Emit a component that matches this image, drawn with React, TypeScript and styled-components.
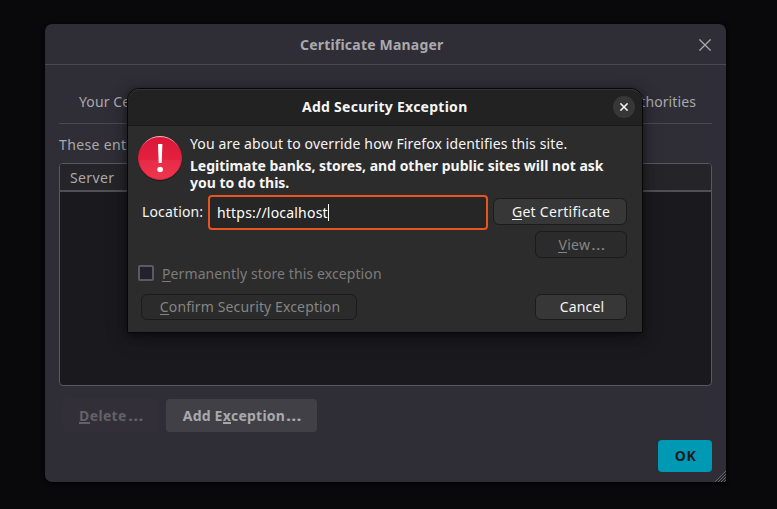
import React from 'react';
import styled, { createGlobalStyle } from 'styled-components';

const GlobalStyle = createGlobalStyle`
  * { box-sizing: border-box; }
  body { margin: 0; background: #09090b; }
  button, input { font: inherit; margin: 0; }
`;

const Screen = styled.div`
  position: relative;
  width: 777px;
  height: 509px;
  padding: 24px 51px 27px 45px;
  overflow: hidden;
  background: #09090b;
  font: 14px/18px "Noto Sans", "Open Sans", sans-serif;
  white-space: nowrap;
`;

const Label = styled.span<{ $track?: number }>`
  display: inline-block;
  letter-spacing: ${(p) => p.$track ?? 0}px;
`;

const Key = styled.span<{ $thick?: boolean }>`
  display: inline-block;
  height: 17px;
  line-height: 18px;
  vertical-align: top;
  border-bottom: ${(p) => (p.$thick ? 2 : 1)}px solid currentColor;
`;

const Ellipsis = styled.span`
  display: inline-block;
  margin: 0 2px 0 1px;
  letter-spacing: 1.2px;
  transform: scaleX(1.3);
  transform-origin: left;
`;

const Manager = styled.section`
  position: relative;
  display: flex;
  flex-direction: column;
  height: 458px;
  border-radius: 7px 7px 3px 7px;
  background: #2f2d36;
  color: #a9a9ac;
  box-shadow: 0 1px 4px #000;
`;

const ManagerHeader = styled.header`
  display: flex;
  align-items: center;
  height: 41px;
  padding: 1px 15px 0 255px;
  justify-content: space-between;
  border-bottom: 1px solid #4b494f;
  font-weight: 700;
`;

const CloseIcon = styled.svg`
  display: block;
  fill: none;
  stroke: currentColor;
`;

const ManagerBody = styled.div`
  display: flex;
  flex-direction: column;
  padding: 15px 14px 10px;
`;

const Tabs = styled.nav`
  display: flex;
  justify-content: space-between;
  align-items: center;
  height: 44px;
  padding: 0 16px 0 20px;
  border-bottom: 1px solid #4b494f;
`;

const Intro = styled.p`
  margin: 12px 0 9px;
`;

const Tree = styled.div`
  height: 223px;
  border: 1px solid #5a585f;
  border-radius: 4px;
  overflow: hidden;
  background: #1a191e;
`;

const TreeHeader = styled.div`
  height: 28px;
  padding: 5px 10px;
  border-bottom: 2px solid #504e56;
  background: #252429;
`;

const ActionRow = styled.div`
  display: flex;
  gap: 8px;
  padding: 13px 0 8px 4px;
`;

const FlatButton = styled.button<{ $width: number; $kind?: 'muted' | 'primary' }>`
  width: ${(p) => p.$width}px;
  height: ${(p) => (p.$kind === 'primary' ? 32 : 33)}px;
  padding: 0 0 0 1px;
  align-self: ${(p) => (p.$kind === 'primary' ? 'flex-end' : 'auto')};
  border: 0;
  border-radius: 4px;
  font-weight: 700;
  background: ${(p) => (p.$kind === 'primary' ? '#0099b3' : p.$kind === 'muted' ? '#322f39' : '#414047')};
  color: ${(p) => (p.$kind === 'primary' ? '#1c1b22' : p.$kind === 'muted' ? '#626166' : '#a9a9ac')};
`;

const Grip = styled.svg`
  position: absolute;
  right: 0;
  bottom: 0;
`;

const DialogShadow = styled.div`
  position: absolute;
  left: 127px;
  top: 88px;
  width: 516px;
  height: 245px;
  border-radius: 12px 12px 0 0;
  box-shadow: 0 2px 10px rgba(0, 0, 0, 0.5), 0 6px 22px rgba(0, 0, 0, 0.2);
`;

const Dialog = styled.section`
  position: absolute;
  left: 127px;
  top: 88px;
  width: 516px;
  height: 245px;
  overflow: hidden;
  border: 1px solid #070708;
  border-radius: 12px 12px 0 0;
  background: #2c2c2c;
  color: #f5f5f5;
`;

const TitleBar = styled.header`
  display: flex;
  align-items: center;
  justify-content: space-between;
  height: 37px;
  padding: 0 7px 0 174px;
  border-bottom: 1px solid #191919;
  border-radius: 11px 11px 0 0;
  box-shadow: inset 0 1px 0 #343434;
  background: #222;
  font-weight: 700;
`;

const RoundClose = styled.button`
  display: grid;
  place-items: center;
  width: 22px;
  height: 22px;
  padding: 0;
  border: 0;
  border-radius: 50%;
  background: #373737;
  color: #fff;
`;

const DialogBody = styled.div`
  display: flex;
  flex-direction: column;
  padding: 9px 15px 0 10px;
`;

const Warning = styled.div`
  display: flex;
  gap: 8px;
  height: 60px;
`;

const AlertDrawing = styled.svg`
  margin-top: 1px;
`;

const Message = styled.p`
  margin: 0;
`;

const Strong = styled.strong`
  display: block;
  padding-top: 4px;
  line-height: 17px;
  letter-spacing: -0.015px;
`;

const LocationRow = styled.div`
  display: flex;
  align-items: center;
  height: 35px;
  padding-left: 4px;
`;

const LocationLabel = styled(Label)`
  padding-bottom: 2px;
`;

const Field = styled.div`
  display: flex;
  align-items: center;
  width: 280px;
  height: 35px;
  margin: 0 5px 0 auto;
  padding: 0 7px;
  border: 2px solid #e95420;
  border-radius: 4px;
  background: #262626;
  color: #fff;
`;

const Caret = styled.i`
  width: 1px;
  height: 17px;
  background: #fff;
`;

const NativeButton = styled.button<{ $width: number; $height?: number; $raised?: boolean }>`
  width: ${(p) => p.$width}px;
  height: ${(p) => p.$height ?? 27}px;
  margin-bottom: ${(p) => (p.$raised ? 2 : 0)}px;
  padding: 0 0 0 2px;
  border: 1px solid #1b1b1b;
  border-radius: 6px;
  background: #373737;
  color: #f5f5f5;

  &:disabled {
    background: #2b2b2b;
    color: #858585;
  }
`;

const ViewRow = styled.div`
  display: flex;
  justify-content: flex-end;
  padding-top: 1px;
`;

const CheckRow = styled.label`
  display: flex;
  align-items: center;
  gap: 8px;
  height: 18px;
  margin-top: 6px;
  color: #7c7c7c;
`;

const CheckLabel = styled(Label)`
  padding-top: 1px;
`;

const CheckBox = styled.span`
  width: 16px;
  height: 16px;
  border: 2px solid #5b5966;
  border-radius: 2px;
  background: #23222b;
`;

const Footer = styled.footer`
  display: flex;
  justify-content: space-between;
  padding: 12px 0 0 3px;
`;

function AlertIcon() {
  return (
    <AlertDrawing width="44" height="46" viewBox="0 0 44 46">
      <defs>
        <linearGradient id="alertRed" x1="0" y1="0" x2="0" y2="1">
          <stop offset="0" stopColor="#dc1638" />
          <stop offset="0.54" stopColor="#e3223f" />
          <stop offset="0.55" stopColor="#e62b48" />
          <stop offset="1" stopColor="#f0364d" />
        </linearGradient>
        <linearGradient id="alertRim" x1="0" y1="0" x2="0" y2="1">
          <stop offset="0" stopColor="#ffb3bd" />
          <stop offset="0.25" stopColor="#d51d3d" />
          <stop offset="1" stopColor="#cf2c42" />
        </linearGradient>
      </defs>
      <ellipse cx="22" cy="22.8" rx="22" ry="22" fill="#1e1418" />
      <circle cx="22" cy="22" r="21.5" fill="url(#alertRed)" stroke="url(#alertRim)" />
      <path d="M20 8h4.4l-.7 19h-3z" fill="#fff" />
      <circle cx="22.1" cy="33.5" r="2.8" fill="#fff" />
    </AlertDrawing>
  );
}

export default function App() {
  return (
    <>
      <GlobalStyle />
      <Screen>
        <Manager>
          <ManagerHeader>
            <Label $track={0.2}>Certificate Manager</Label>
            <CloseIcon width="12" height="12" viewBox="0 0 12 12" strokeWidth="1.3">
              <path d="M.4.4l11.2 11.2M11.6.4L.4 11.6" />
            </CloseIcon>
          </ManagerHeader>
          <ManagerBody>
            <Tabs>
              <Label $track={0.1}>Your Ce</Label>
              <Label $track={0.1}>Authorities</Label>
            </Tabs>
            <Intro>
              <Label $track={0.35}>These entries</Label>
            </Intro>
            <Tree>
              <TreeHeader>
                <Label $track={0.36}>Server</Label>
              </TreeHeader>
            </Tree>
            <ActionRow>
              <FlatButton $width={95} $kind="muted" disabled>
                <Label $track={0.35}>
                  <Key $thick>D</Key>elete<Ellipsis>…</Ellipsis>
                </Label>
              </FlatButton>
              <FlatButton $width={151}>
                <Label $track={0.22}>
                  Add E<Key $thick>x</Key>ception<Ellipsis>…</Ellipsis>
                </Label>
              </FlatButton>
            </ActionRow>
            <FlatButton $width={54} $kind="primary">
              <Label $track={0.6}>OK</Label>
            </FlatButton>
          </ManagerBody>
          <Grip width="11" height="11" viewBox="0 0 11 11" fill="none">
            <path d="M0 11L11 0M3 11l8-8M6 11l5-5M9 11l2-2" stroke="#77767b" strokeWidth="0.8" />
            <path d="M1.5 11L11 1.5M4.5 11L11 4.5M7.5 11L11 7.5" stroke="#17161b" strokeWidth="0.8" />
          </Grip>
        </Manager>
        <DialogShadow />
        <Dialog>
          <TitleBar>
            <Label $track={0.26}>Add Security Exception</Label>
            <RoundClose aria-label="Close">
              <CloseIcon width="8" height="8" viewBox="0 0 8 8" strokeWidth="1.5">
                <path d="M.4.4l7.2 7.2M7.6.4L.4 7.6" />
              </CloseIcon>
            </RoundClose>
          </TitleBar>
          <DialogBody>
            <Warning>
              <AlertIcon />
              <Message>
                <Label $track={0.135}>You are about to override how Firefox identifies this site.</Label>
                <Strong>
                  Legitimate banks, stores, and other public sites will not ask
                  <br />
                  you to do this.
                </Strong>
              </Message>
            </Warning>
            <LocationRow>
              <LocationLabel $track={0.15}>Location:</LocationLabel>
              <Field>
                <Label $track={0.2}>https://localhost</Label>
                <Caret />
              </Field>
              <NativeButton $width={134} $raised>
                <Label $track={0.28}>
                  <Key>G</Key>et Certificate
                </Label>
              </NativeButton>
            </LocationRow>
            <ViewRow>
              <NativeButton $width={92} disabled>
                <Label $track={0.3}>
                  <Key>V</Key>iew<Ellipsis>…</Ellipsis>
                </Label>
              </NativeButton>
            </ViewRow>
            <CheckRow>
              <CheckBox />
              <CheckLabel $track={0.1}>
                <Key>P</Key>ermanently store this exception
              </CheckLabel>
            </CheckRow>
            <Footer>
              <NativeButton $width={216} $height={26} disabled>
                <Label $track={0.13}>
                  <Key>C</Key>onfirm Security Exception
                </Label>
              </NativeButton>
              <NativeButton $width={92} $height={26}>
                <Label $track={0.15}>Cancel</Label>
              </NativeButton>
            </Footer>
          </DialogBody>
        </Dialog>
      </Screen>
    </>
  );
}
